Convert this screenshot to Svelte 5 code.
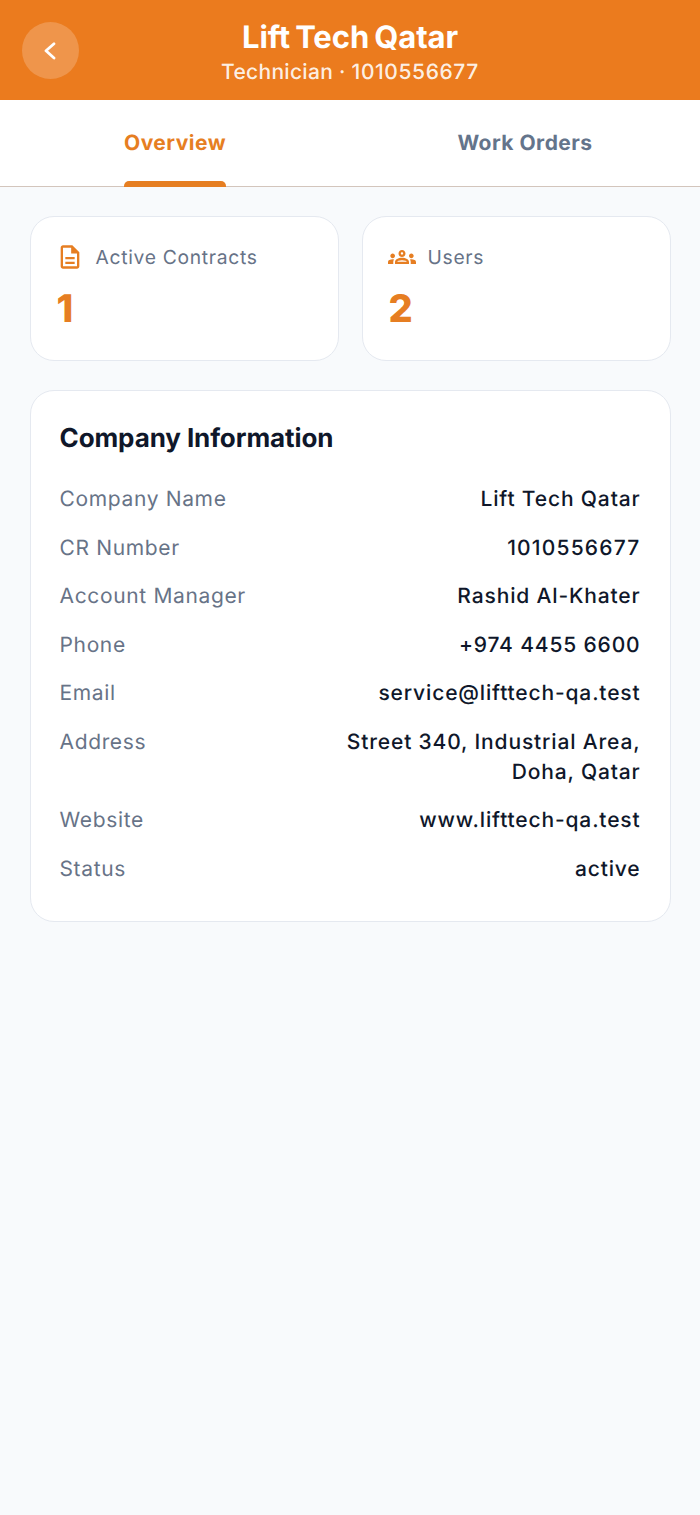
<script lang="ts">
  const rows = [
    ["Company Name", ["Lift Tech Qatar"]],
    ["CR Number", ["1010556677"]],
    ["Account Manager", ["Rashid Al-Khater"]],
    ["Phone", ["+974 4455 6600"]],
    ["Email", ["service@lifttech-qa.test"]],
    ["Address", ["Street 340, Industrial Area,", "Doha, Qatar"]],
    ["Website", ["www.lifttech-qa.test"]],
    ["Status", ["active"]],
  ] as const;
</script>

<div class="page">
  <header class="header">
    <button class="back" aria-label="Back">
      <svg width="18" height="18" viewBox="0 0 18 18" fill="none">
        <path d="M12 1.8 4 8.8l8 7.2" stroke="#fff" stroke-width="2.8" stroke-linecap="round" stroke-linejoin="round" />
      </svg>
    </button>
    <h1>Lift Tech Qatar</h1>
    <p>Technician · <span class="digits">1010556677</span></p>
  </header>

  <nav class="tabs">
    <div class="tab active">Overview<span class="bar"></span></div>
    <div class="tab">Work Orders</div>
  </nav>

  <main class="content">
    <div class="stats">
      <section class="card stat">
        <div class="stat-label">
          <svg width="28" height="28" viewBox="0 0 24 24" fill="#e67e22">
            <path d="M8 16h8v2H8zm0-4h8v2H8zm6-10H6c-1.1 0-2 .9-2 2v16c0 1.1.89 2 1.99 2H18c1.1 0 2-.9 2-2V8l-6-6zm4 18H6V4h7v5h5v11z" />
          </svg>
          <span>Active Contracts</span>
        </div>
        <div class="stat-value">1</div>
      </section>
      <section class="card stat">
        <div class="stat-label">
          <svg width="28" height="28" viewBox="0 0 24 24" fill="#e67e22">
            <path d="M4,13c1.1,0,2-0.9,2-2c0-1.1-0.9-2-2-2s-2,0.9-2,2C2,12.1,2.9,13,4,13z M5.13,14.1C4.76,14.04,4.39,14,4,14 c-0.99,0-1.93,0.21-2.78,0.58C0.48,14.9,0,15.62,0,16.43V18l4.5,0v-1.61C4.5,15.56,4.73,14.78,5.13,14.1z M20,13c1.1,0,2-0.9,2-2 c0-1.1-0.9-2-2-2s-2,0.9-2,2C18,12.1,18.9,13,20,13z M24,16.43c0-0.81-0.48-1.53-1.22-1.85C21.93,14.21,20.99,14,20,14 c-0.39,0-0.76,0.04-1.13,0.1c0.4,0.68,0.63,1.46,0.63,2.29V18l4.5,0V16.43z M16.24,13.65c-1.17-0.52-2.61-0.9-4.24-0.9 c-1.63,0-3.07,0.39-4.24,0.9C6.68,14.13,6,15.21,6,16.39V18h12v-1.61C18,15.21,17.32,14.13,16.24,13.65z M8.07,16 c0.09-0.23,0.13-0.39,0.91-0.69c0.97-0.38,1.99-0.56,3.02-0.56s2.05,0.18,3.02,0.56c0.77,0.3,0.81,0.46,0.91,0.69H8.07z M12,8 c0.55,0,1,0.45,1,1s-0.45,1-1,1s-1-0.45-1-1S11.45,8,12,8 M12,6c-1.66,0-3,1.34-3,3c0,1.66,1.34,3,3,3s3-1.34,3-3 C15,7.34,13.66,6,12,6L12,6z" />
          </svg>
          <span>Users</span>
        </div>
        <div class="stat-value">2</div>
      </section>
    </div>

    <section class="card info">
      <h2>Company Information</h2>
      {#each rows as [label, lines]}
        <div class="row">
          <span class="label">{label}</span>
          <span class="value">
            {#each lines as line}<span class="line" class:digits={label === "CR Number"}>{line}</span>{/each}
          </span>
        </div>
      {/each}
    </section>
  </main>
</div>

<style>
  :global(body) { margin: 0; background: #f8fafc; }
  .page { min-height: 1515px; background: #f8fafc; font-family: Inter, "Noto Sans", sans-serif; text-rendering: geometricPrecision; box-sizing: border-box; }

  .header { position: relative; height: 100px; background: #eb7b1e; color: #fff; text-align: center; box-sizing: border-box; padding-top: 19px; }
  .back { position: absolute; left: 22px; top: 22px; width: 57px; height: 57px; border: none; border-radius: 50%; padding: 0; background: rgba(255, 255, 255, 0.2); display: flex; align-items: center; justify-content: center; }
  h1 { margin: 0; font-size: 31px; line-height: 38px; font-weight: 700; letter-spacing: -0.1px; word-spacing: -2px; }
  .header p { margin: 0; padding-top: 1px; font-size: 21px; line-height: 30px; font-weight: 500; letter-spacing: 0.3px; color: rgba(255, 255, 255, 0.9); }
  .header p .digits { letter-spacing: 0.6px; }

  .tabs { display: flex; height: 86.5px; background: #fff; border-bottom: 1.5px solid #d3c5bc; box-sizing: border-box; }
  .tab { flex: 1; position: relative; display: flex; align-items: center; justify-content: center; font-size: 21px; font-weight: 700; letter-spacing: 0.48px; color: #64748b; padding-top: 1px; box-sizing: border-box; }
  .tab.active { color: #e67e22; }
  .bar { position: absolute; left: 50%; bottom: -1.5px; width: 102px; height: 6px; margin-left: -51px; background: #e67e22; border-radius: 5px 5px 0 0; }

  .content { padding: 29.5px; }
  .stats { display: flex; gap: 23px; }
  .card { background: #fff; border: 1.75px solid #e5e9f0; border-radius: 24px; box-sizing: border-box; }
  .stat { flex: 1; height: 144.5px; padding: 26px 25px; }
  .stat-label { display: flex; align-items: center; gap: 12px; font-size: 19.25px; line-height: 28px; color: #677387; letter-spacing: 0.7px; }
  .stat-label svg { display: block; flex: none; }
  .stat-value { margin-top: 15px; padding-left: 1px; font-size: 38px; line-height: 46px; font-weight: 800; color: #e67e22; }

  .info { margin-top: 29.5px; height: 532px; padding: 28.5px 29px; }
  h2 { margin: 0 0 27.5px; font-size: 26px; line-height: 38px; font-weight: 700; letter-spacing: -0.1px; color: #0f172a; }
  .row { display: flex; justify-content: space-between; margin-bottom: 18.5px; font-size: 21px; line-height: 30px; letter-spacing: 0.65px; }
  .label { color: #677387; }
  .value { color: #0f172a; font-weight: 550; letter-spacing: 0.85px; text-align: right; }
  .line { display: block; }
  .line.digits { letter-spacing: 1.2px; }
</style>
